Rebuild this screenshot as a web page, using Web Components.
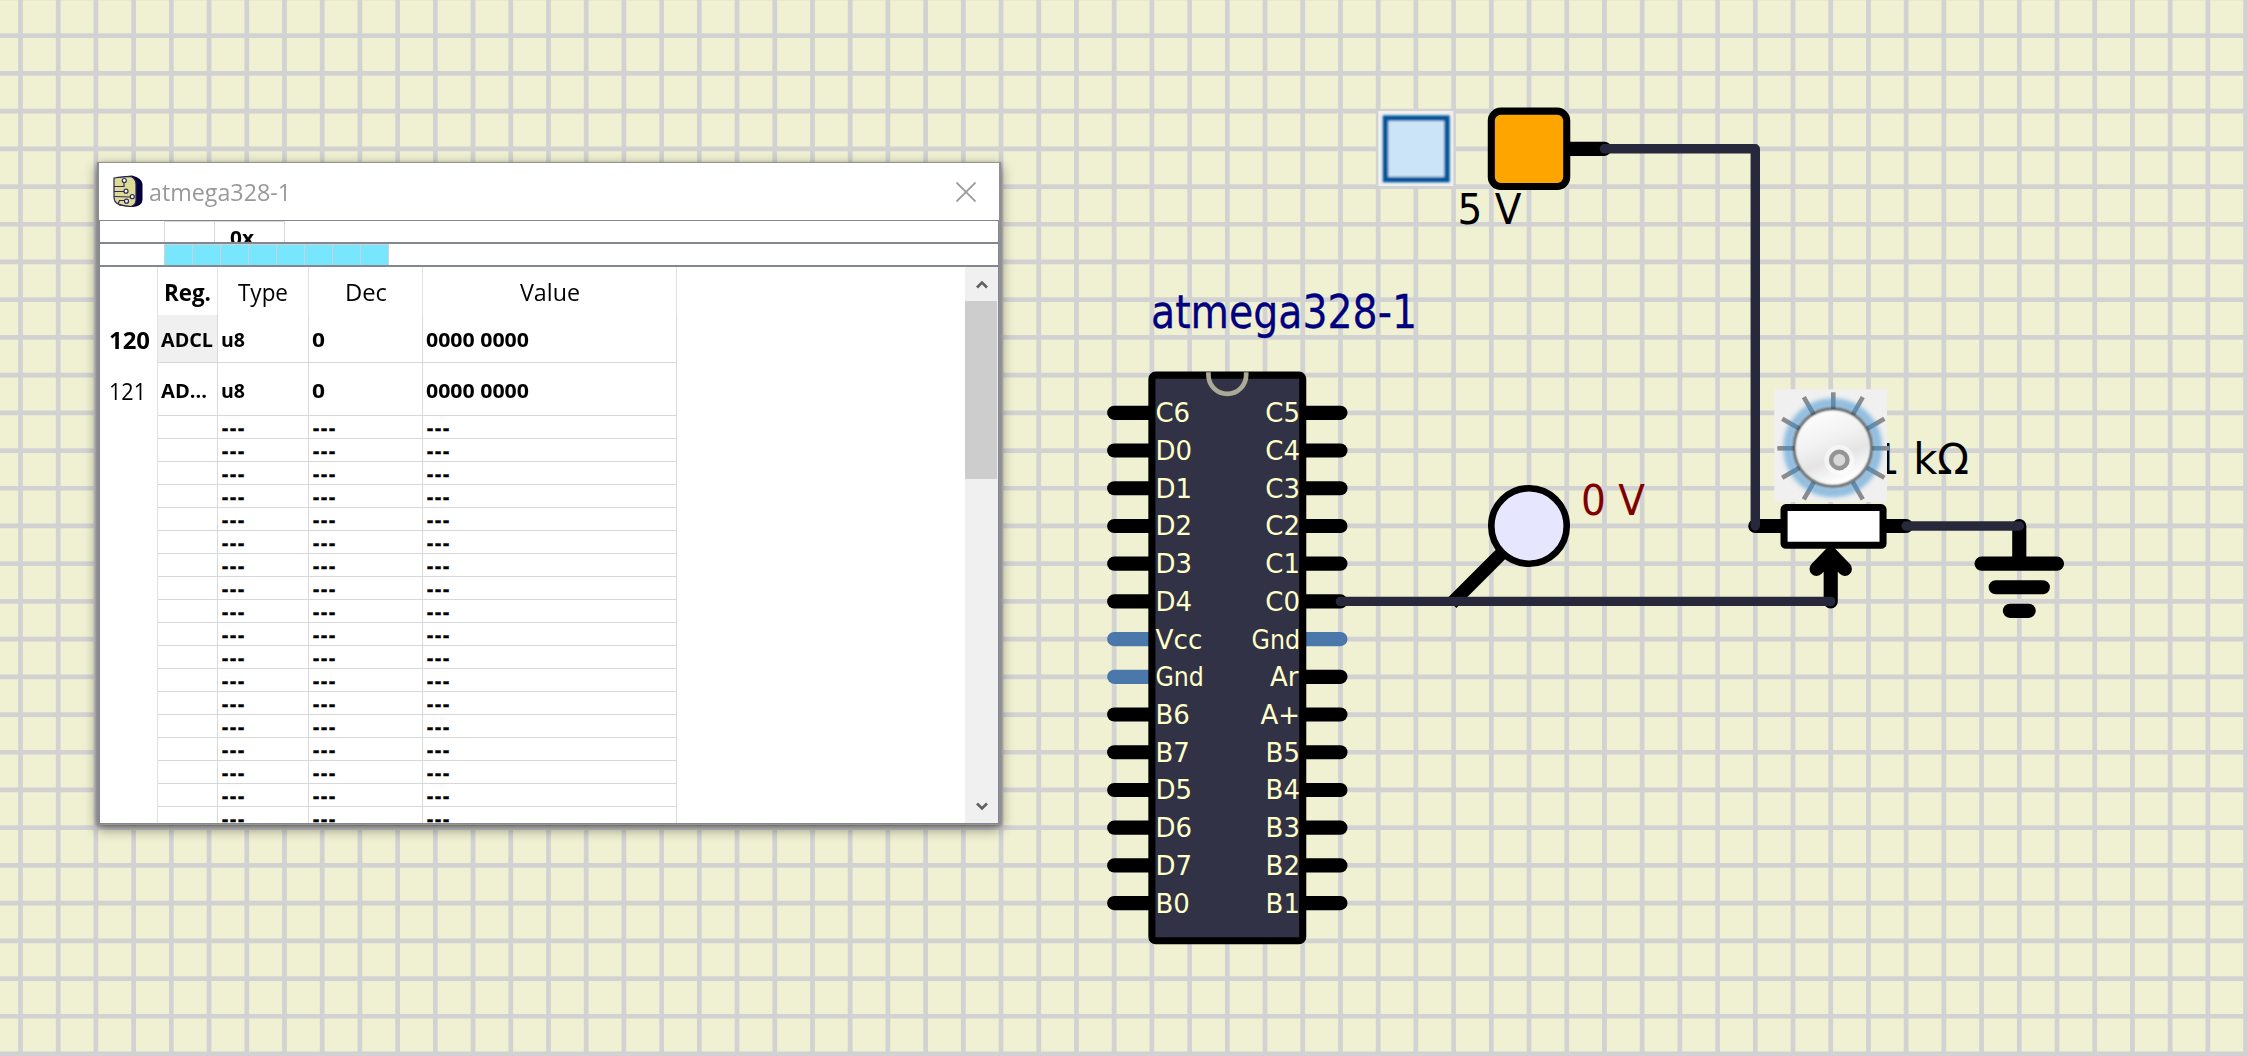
<!DOCTYPE html>
<html lang="en">
<head>
<meta charset="utf-8">
<title>atmega328-1</title>
<style>
html,body{margin:0;height:100%;overflow:hidden;background:#f0f0d2}
</style>
</head>
<body>
<circuit-desktop>
  <circuit-canvas></circuit-canvas>
  <mcu-window slot="window" caption="atmega328-1"></mcu-window>
</circuit-desktop>
<script>
/* Text squeezed or stretched to a given advance width */
class FitText extends HTMLElement {
  connectedCallback() {
    const root = this.attachShadow({mode: 'open'});
    root.innerHTML = `<style>:host{display:block;white-space:pre;width:${this.getAttribute('w')}px;position:relative;top:${this.getAttribute('dy') || 0}px}
      span{display:inline-block;transform-origin:0 50%}</style><span><slot></slot></span>`;
    const s = root.querySelector('span');
    const n = s.getBoundingClientRect().width;
    if (n) s.style.transform = `scaleX(${this.getAttribute('w') / n})`;
  }
}

class CircuitDesktop extends HTMLElement {
  constructor() {
    super();
    this.attachShadow({mode: 'open'}).innerHTML = `<style>
      :host{display:block;position:relative;width:2248px;height:1056px;overflow:hidden}
      .win{position:absolute;left:97px;top:162px}
      </style><slot></slot><div class="win"><slot name="window"></slot></div>`;
  }
}

/* Schematic: one grid cell is 8 units, 37.713px */
class CircuitCanvas extends HTMLElement {
  constructor() {
    super();
    const P = 37.713, X0 = 20.5, Y0 = 35.7;
    let grid = '';
    for (let i = 0; i < 60; i++) grid += `M${X0 + i * P} 0V1056`;
    for (let j = -1; j < 28; j++) grid += `M0 ${Y0 + j * P}H2248`;
    const left = ['C6','D0','D1','D2','D3','D4','Vcc','Gnd','B6','B7','D5','D6','D7','B0'];
    const right = ['C5','C4','C3','C2','C1','C0','Gnd','Ar','A+','B5','B4','B3','B2','B1'];
    const fit = n => n == 'Gnd' ? 'textLength="48.5" lengthAdjust="spacingAndGlyphs"' : n == 'Vcc' ? 'textLength="47" lengthAdjust="spacingAndGlyphs"' : '';
    let pins = '', names = '';
    left.forEach((n, i) => {
      const y = 80 + i * 8;
      pins += `<path d="M232 ${y}H240" ${i == 6 || i == 7 ? 'stroke="#4b78aa"' : ''}/>`;
      names += `<text x="1155.4" y="${422.3 + i * P}" ${fit(n)}>${n}</text>`;
    });
    right.forEach((n, i) => {
      const y = 80 + i * 8;
      pins += `<path d="M272 ${y}H280" ${i == 6 ? 'stroke="#4b78aa"' : ''}/>`;
      names += `<text x="${n == 'Ar' ? 1298.5 : 1300}" y="${422.3 + i * P}" text-anchor="end" ${fit(n)}>${n}</text>`;
    });
    let ticks = '';
    for (let a = -150; a <= 150; a += 30) ticks += `<path d="M0 -39V${a % 90 ? -59 : -56}" transform="rotate(${a})"/>`;
    this.attachShadow({mode: 'open'}).innerHTML = `<style>
      :host{display:block}
      svg{display:block}
      .pins{font:26px "DejaVu Sans",sans-serif;fill:#ffffc8}
      .lbl{font-family:"DejaVu Sans",sans-serif}
      </style>
      <svg width="2248" height="1056" viewBox="0 0 2248 1056">
      <defs>
        <filter id="b1" x="-20%" y="-20%" width="140%" height="140%"><feGaussianBlur stdDeviation="1.1"/></filter>
        <filter id="b2" x="-20%" y="-20%" width="140%" height="140%"><feGaussianBlur stdDeviation="2.2"/></filter>
        <linearGradient id="k" x1="0.1" y1="0" x2="0.5" y2="1"><stop offset="0" stop-color="#fff"/><stop offset=".45" stop-color="#f2f2f2"/><stop offset=".7" stop-color="#e4e4e4"/><stop offset="1" stop-color="#fff"/></linearGradient>
      </defs>
      <rect width="2248" height="1056" fill="#f0f0d2"/>
      <path d="${grid}" stroke="#d2d2d2" stroke-width="4.71" fill="none"/>
      <g transform="translate(${X0} ${Y0}) scale(4.7141)" fill="none" stroke="#000" stroke-width="3" stroke-linecap="round">
        ${pins}
        <rect x="240" y="72" width="32" height="120" rx=".8" fill="#323246" stroke-width="1.5"/>
        <path d="M252 71.4V72A4 4 0 0 0 260 72V71.4" stroke="#aaaa96" stroke-width="1" stroke-linecap="butt"/>
        <path d="M328 24H336"/>
        <rect x="312" y="16" width="16" height="16" rx="2" fill="#ffa500" stroke-width="1.5"/>
        <path d="M368 104H374M395 104H400"/>
        <path d="M384 120V110M381 113.1L384 110L387 113.1"/>
        <rect x="374.1" y="100.1" width="21" height="8" rx=".4" fill="#fff" stroke-width="1.5"/>
        <path d="M424 104V112M416 112H432M419 117H429M422 122H426"/>
        <path d="M303.600 120.400L315 109" stroke-width="2.8" stroke-linecap="butt"/>
        <circle cx="320" cy="104" r="8" fill="#e6e6ff" stroke-width="1.4"/>
        <path d="M336 24H368V104M400 104H424M280 120H384" stroke="#28283c" stroke-width="2" stroke-linejoin="round"/>
      </g>
      <g class="pins">${names}</g>
      <text class="lbl" x="1151" y="327.500" font-size="46" fill="#000080" stroke="#000080" stroke-width=".3" textLength="266" lengthAdjust="spacingAndGlyphs">atmega328-1</text>
      <text class="lbl" x="1457.500" y="224" font-size="42" textLength="64" lengthAdjust="spacingAndGlyphs">5 V</text>
      <text class="lbl" x="1581" y="514.500" font-size="42" fill="#800000" textLength="64" lengthAdjust="spacingAndGlyphs">0 V</text>
      <text class="lbl" x="1873.500" y="473.700" font-size="42" textLength="95.500" lengthAdjust="spacingAndGlyphs">1 kΩ</text>
      <rect x="1378.300" y="111" width="75" height="75" fill="#f0f0f0"/>
      <rect x="1385.500" y="118.100" width="61.500" height="61.500" fill="#cce4f7" stroke="#00549a" stroke-width="5.400" filter="url(#b1)"/>
      <rect x="1391" y="124" width="50.500" height="50.500" fill="#cce4f7"/>
      <rect x="1774.300" y="389.300" width="112.700" height="112.700" fill="#f0f0f0"/>
      <g transform="translate(1833.3 448.3)" fill="none">
        <g stroke="#8c8c8c" stroke-width="4.600">${ticks}</g>
        <circle cx="-.5" cy="-.5" r="44.500" stroke="#2f8bd0" stroke-opacity=".5" stroke-width="10" filter="url(#b2)"/>
        <circle cx="-.5" cy="-.8" r="38.500" stroke="#333" stroke-width="3.4" stroke-opacity=".7" filter="url(#b1)"/>
        <circle cx="-.5" cy="-.8" r="37" fill="url(#k)" filter="url(#b1)"/>
        <circle cx="6" cy="11.700" r="12.500" stroke="#fff" stroke-opacity=".5" stroke-width="5"/>
        <circle cx="6" cy="11.700" r="8.200" fill="#d8d8d8" stroke="#949494" stroke-width="4.400"/>
      </g>
      </svg>`;
  }
}

class AppIcon extends HTMLElement {
  constructor() {
    super();
    this.attachShadow({mode: 'open'}).innerHTML = `<style>:host{display:block;width:30px;height:33px}svg{display:block}</style>
      <svg width="30" height="33" viewBox="0 0 30 33">
      <path d="M3 2L19 .5Q29 3 29.5 9V25Q29 31 20 32L6 30.5Z" fill="#05003c"/>
      <path d="M1 3Q10 2 18 1.500Q23 4 23 9V25Q23 30 18 31.500Q10 31 5 29Q1 27 1 22Z" fill="#dcdc96" stroke="#281e50" stroke-width="1.2"/>
      <g fill="none" stroke="#32285a" stroke-width="1.2"><path d="M1 11.500H11V7M1 16.500H11M1 21.500L17 22M5 29L6.500 25.500H12"/>
      <g fill="#fff"><circle cx="11.300" cy="5.500" r="2"/><circle cx="13" cy="16.200" r="2"/><circle cx="19.300" cy="21.700" r="2"/><circle cx="13.500" cy="26.200" r="2"/></g></g></svg>`;
  }
}

class RamTable extends HTMLElement {
  constructor() {
    super();
    let rows = '';
    for (let i = 0; i < 18; i++)
      rows += `<div class="r s"><i></i><b></b><b>---</b><b>---</b><b>---</b></div>`;
    const t = (v, w, dy) => `<fit-text w="${w}" dy="${dy || 0}">${v}</fit-text>`;
    this.attachShadow({mode: 'open'}).innerHTML = `<style>
      :host{display:block;width:577px;height:556px;overflow:hidden;font:19px "Open Sans",sans-serif;color:#000}
      .r{display:grid;grid-template-columns:58px 60px 91px 114px 254px;height:53px}
      .r>*{box-sizing:border-box;border-right:1px solid #d8d8d8;border-bottom:1px solid #d8d8d8;display:flex;align-items:center;padding-left:3px;font-style:normal;font-weight:700;white-space:pre;min-width:0}
      .r>i{border-bottom:0;padding-left:9px;font-size:23px;font-weight:400;border-color:#e2e2e2}
      .h{height:48px}.h>*{border-bottom:0;font-size:23px;font-weight:400;justify-content:center;padding:0;border-color:#e2e2e2}
      .h .on{font-weight:700}
      .a{height:48px}.r>.sel{background:#f0f0f0}
      .r>.n{font-weight:700}
      .s{height:23px}.s>b{line-height:18px;letter-spacing:1.9px;padding:2px 0 0 4px;-webkit-text-stroke:.5px #000}
      </style>
      <div class="r h"><i></i><b class="on">${t('Reg.', 47, 1)}</b><b>${t('Type', 50, 1)}</b><b>${t('Dec', 42, 1)}</b><b>${t('Value', 60, 1)}</b></div>
      <div class="r a"><i class="n">${t('120', 41, 1)}</i><b class="sel">${t('ADCL', 52, 1)}</b><b>${t('u8', 24, 1)}</b><b>${t('0', 13, 1)}</b><b>${t('0000 0000', 103, 1)}</b></div>
      <div class="r"><i>${t('121', 37, 1)}</i><b>${t('AD...', 46, 2)}</b><b>${t('u8', 24, 2)}</b><b>${t('0', 13, 2)}</b><b>${t('0000 0000', 103, 2)}</b></div>
      ${rows}`;
  }
}

class ScrollBar extends HTMLElement {
  constructor() {
    super();
    const chev = d => `<svg width="12" height="9" viewBox="0 0 12 9"><path d="${d}" fill="none" stroke="#606060" stroke-width="2.600"/></svg>`;
    this.attachShadow({mode: 'open'}).innerHTML = `<style>
      :host{display:flex;flex-direction:column;width:33px;background:#f0f0f0}
      div{height:34px;display:flex;align-items:center;justify-content:center;box-sizing:border-box}
      .t{height:178px;width:32px;background:#cdcdcd}.g{flex:1}svg{display:block}
      </style><div>${chev('M1 7.500L6 2.500L11 7.500')}</div><div class="t"></div><div class="g"></div><div>${chev('M1 1.500L6 6.500L11 1.500')}</div>`;
  }
}

class McuWindow extends HTMLElement {
  connectedCallback() {
    this.attachShadow({mode: 'open'}).innerHTML = `<style>
      :host{display:flex;flex-direction:column;box-sizing:border-box;width:904px;height:663px;border:1px solid #96968a;border-left:2px solid #8c8c8c;border-right:2px solid #909094;background:#fff;box-shadow:0 4px 12px rgba(0,0,0,.45),0 1px 3px rgba(0,0,0,.3);font:19px "Open Sans",sans-serif}
      header{display:flex;align-items:center;height:57px;padding:0 23px 0 14px;color:#999;font-size:24px}
      header fit-text{margin-left:6px}
      .x{margin-left:auto}
      .strip,.strip2,.body{border:1px solid #828790;display:flex;box-sizing:border-box}
      .strip{height:23px;padding-left:64px;overflow:hidden}
      .strip div{box-sizing:border-box;border:1px solid #d8d8d8;border-right:0;height:40px}
      .strip .c1{width:50px}.strip .c2{width:71px;border-right:1px solid #d8d8d8;padding:3px 0 0 15px;font-weight:700}
      .strip2{height:23px;padding-left:64px}
      .strip2 div{width:28px;box-sizing:border-box;border-right:1px solid #d2d2d2;border-top:1px solid #d2d2d2;background:#78e6ff}
      .strip2 div:first-child{border-left:1px solid #d2d2d2;width:29px}
      .body{height:558px;justify-content:space-between}
      </style>
      <header><app-icon></app-icon><fit-text w="142">${this.getAttribute('caption')}</fit-text>
      <svg class="x" width="20" height="20"><path d="M.5 .5L19.500 19.500M19.500 .5L.5 19.500" stroke="#999" stroke-width="1.800"/></svg></header>
      <section class="strip"><div class="c1"></div><div class="c2"><fit-text w="24">0x</fit-text></div></section>
      <section class="strip2">${'<div></div>'.repeat(8)}</section>
      <section class="body"><ram-table></ram-table><scroll-bar></scroll-bar></section>`;
  }
}
customElements.define('fit-text', FitText);
customElements.define('app-icon', AppIcon);
customElements.define('ram-table', RamTable);
customElements.define('scroll-bar', ScrollBar);
customElements.define('mcu-window', McuWindow);
customElements.define('circuit-canvas', CircuitCanvas);
customElements.define('circuit-desktop', CircuitDesktop);
</script>
</body>
</html>
